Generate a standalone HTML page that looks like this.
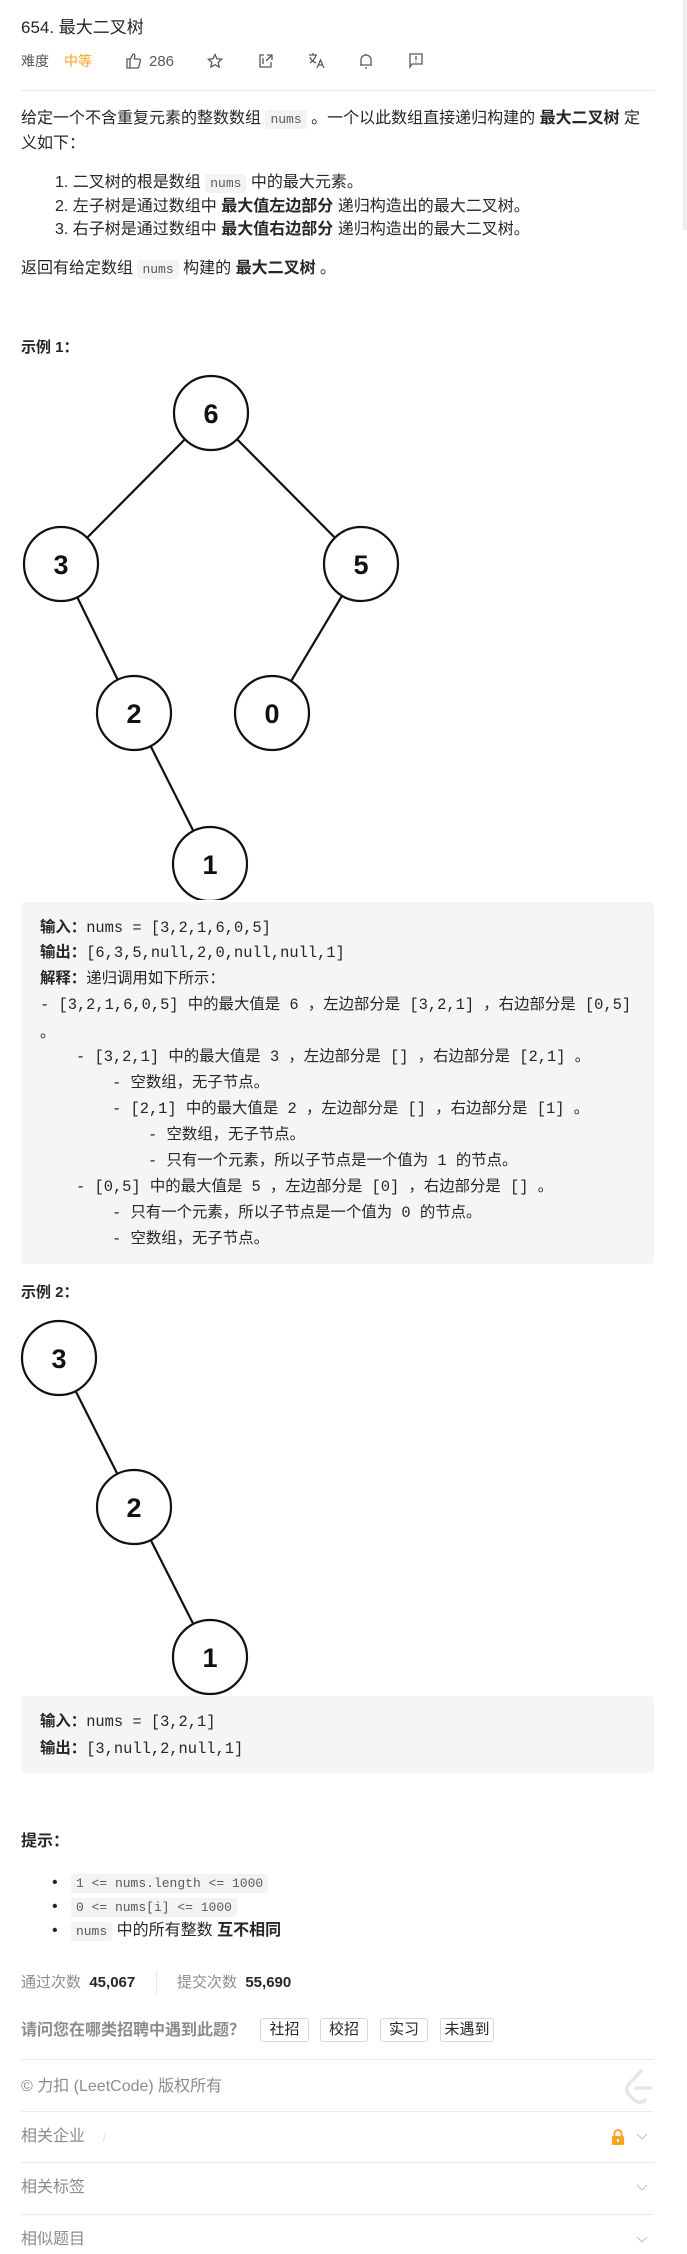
<!DOCTYPE html>
<html><head><meta charset="utf-8">
<style>
*{margin:0;padding:0;box-sizing:border-box}
body{width:687px;height:2254px;background:#fff;position:relative;overflow:hidden;font-family:"Liberation Sans","Noto Sans CJK SC",sans-serif;color:#262626;font-size:14px}
.a{position:absolute;white-space:nowrap}
code{font-family:"Liberation Mono","Noto Sans CJK SC",monospace;background:#f3f3f3;color:#595959;font-size:13px;padding:2px 5px;border-radius:3px}
b{font-weight:bold}
.pre{position:absolute;left:21px;width:633px;background:#f5f5f5;border-radius:4px}
.pl{position:absolute;white-space:nowrap;font-family:"Liberation Mono","Noto Sans CJK SC",monospace;font-size:15.4px;color:#262626;line-height:20px}
.pl b{font-family:"Liberation Sans","Noto Sans CJK SC",sans-serif}
.hr{position:absolute;left:21px;width:633px;height:1px;background:#ebebeb}
.gray{color:#8c8c8c}
.btn{position:absolute;top:2018px;height:24px;border:1px solid #d9d9d9;border-radius:3px;font-size:15px;line-height:22px;text-align:center;color:#262626}
.t{font-size:16px;line-height:24px}
</style></head><body>
<div class="a" style="left:21px;top:16px;font-size:17px;line-height:24px">654. 最大二叉树</div>
<div class="a" style="left:21px;top:51px;font-size:14px;line-height:20px;color:#595959">难度</div>
<div class="a" style="left:64px;top:51px;font-size:14px;line-height:20px;color:#ffa116">中等</div>
<svg class="a" style="left:125px;top:52px" width="60" height="18" viewBox="0 0 60 18" fill="none" stroke="#595959" stroke-width="1.3"><path d="M2 7h3v9H2zM5 8l3-6c1.5 0 2 1 1.8 2.2L9.3 7H14c1 0 1.5 .8 1.3 1.6l-1.5 6.2c-.2.8-.8 1.2-1.5 1.2H5"/><text x="24" y="14" font-size="15" fill="#595959" stroke="none" font-family="Liberation Sans">286</text></svg>
<svg class="a" style="left:207px;top:53px" width="16" height="16" viewBox="0 0 16 16" fill="none" stroke="#595959" stroke-width="1.3"><path d="M8 1.5l2 4.3 4.6.5-3.4 3.1 1 4.6L8 11.7 3.8 14l1-4.6L1.4 6.3 6 5.8z"/></svg>
<svg class="a" style="left:258px;top:53px" width="16" height="16" viewBox="0 0 16 16" fill="none" stroke="#595959" stroke-width="1.3"><path d="M6 2H2v12h11v-5M9 2h5v5M14 2L8 8M5 5v6"/></svg>
<svg class="a" style="left:308px;top:52px" width="18" height="18" viewBox="0 0 18 18" fill="none" stroke="#595959" stroke-width="1.3"><path d="M1 3h8M5 1v2M2 5c1 3 3 5 6 6M8 3c-1 4-3 6-6 8M9 16l3.5-8 3.5 8M10.5 13h4"/></svg>
<svg class="a" style="left:358px;top:52px" width="16" height="18" viewBox="0 0 16 18" fill="none" stroke="#595959" stroke-width="1.3"><path d="M3 13V8a5 5 0 0110 0v5H3zM2 13h12M7 16h2M8 2v1"/></svg>
<svg class="a" style="left:408px;top:52px" width="16" height="18" viewBox="0 0 16 18" fill="none" stroke="#595959" stroke-width="1.3"><path d="M2 2h12v10H4l-2 3zM8 4v4M8 9.5v1"/></svg>
<div class="hr" style="top:90px"></div>

<div class="a t" style="left:21px;top:107px">给定一个不含重复元素的整数数组 <code>nums</code> 。一个以此数组直接递归构建的 <b>最大二叉树</b> 定</div>
<div class="a t" style="left:21px;top:132px">义如下：</div>
<div class="a t" style="left:55px;top:171px">1. 二叉树的根是数组 <code>nums</code> 中的最大元素。</div>
<div class="a t" style="left:55px;top:195px">2. 左子树是通过数组中 <b>最大值左边部分</b> 递归构造出的最大二叉树。</div>
<div class="a t" style="left:55px;top:218px">3. 右子树是通过数组中 <b>最大值右边部分</b> 递归构造出的最大二叉树。</div>
<div class="a t" style="left:21px;top:257px">返回有给定数组 <code>nums</code> 构建的 <b>最大二叉树</b> 。</div>

<div class="a" style="left:21px;top:338px;font-size:15px;line-height:20px"><b>示例 1：</b></div>
<svg class="a" style="left:0;top:360px" width="420" height="540" viewBox="0 360 420 540" stroke="#111" stroke-width="2.2" fill="#fff" font-family="Liberation Sans" font-weight="bold" font-size="27">
<path d="M211 413L61 564M211 413L361 564M61 564L134 713M361 564L272 713M134 713L210 864" fill="none"/>
<circle cx="211" cy="413" r="37"/><circle cx="61" cy="564" r="37"/><circle cx="361" cy="564" r="37"/><circle cx="134" cy="713" r="37"/><circle cx="272" cy="713" r="37"/><circle cx="210" cy="864" r="37"/>
<g fill="#111" stroke="none" text-anchor="middle"><text x="211" y="423">6</text><text x="61" y="574">3</text><text x="361" y="574">5</text><text x="134" y="723">2</text><text x="272" y="723">0</text><text x="210" y="874">1</text></g>
</svg>

<div class="pre" style="top:902px;height:362px"></div>
<div class="pl" style="left:40px;top:918px"><b>输入：</b>nums = [3,2,1,6,0,5]</div>
<div class="pl" style="left:40px;top:943px"><b>输出：</b>[6,3,5,null,2,0,null,null,1]</div>
<div class="pl" style="left:40px;top:969px"><b>解释：</b>递归调用如下所示：</div>
<div class="pl" style="left:40px;top:995px">- [3,2,1,6,0,5] 中的最大值是 6 ，左边部分是 [3,2,1] ，右边部分是 [0,5]</div>
<div class="pl" style="left:40px;top:1023px">。</div>
<div class="pl" style="left:76px;top:1047px">- [3,2,1] 中的最大值是 3 ，左边部分是 [] ，右边部分是 [2,1] 。</div>
<div class="pl" style="left:112px;top:1073px">- 空数组，无子节点。</div>
<div class="pl" style="left:112px;top:1099px">- [2,1] 中的最大值是 2 ，左边部分是 [] ，右边部分是 [1] 。</div>
<div class="pl" style="left:148px;top:1125px">- 空数组，无子节点。</div>
<div class="pl" style="left:148px;top:1151px">- 只有一个元素，所以子节点是一个值为 1 的节点。</div>
<div class="pl" style="left:76px;top:1177px">- [0,5] 中的最大值是 5 ，左边部分是 [0] ，右边部分是 [] 。</div>
<div class="pl" style="left:112px;top:1203px">- 只有一个元素，所以子节点是一个值为 0 的节点。</div>
<div class="pl" style="left:112px;top:1229px">- 空数组，无子节点。</div>

<div class="a" style="left:21px;top:1283px;font-size:15px;line-height:20px"><b>示例 2：</b></div>
<svg class="a" style="left:0;top:1310px" width="260" height="395" viewBox="0 1310 260 395" stroke="#111" stroke-width="2.2" fill="#fff" font-family="Liberation Sans" font-weight="bold" font-size="27">
<path d="M59 1358L134 1507M134 1507L210 1657" fill="none"/>
<circle cx="59" cy="1358" r="37"/><circle cx="134" cy="1507" r="37"/><circle cx="210" cy="1657" r="37"/>
<g fill="#111" stroke="none" text-anchor="middle"><text x="59" y="1368">3</text><text x="134" y="1517">2</text><text x="210" y="1667">1</text></g>
</svg>
<div class="pre" style="top:1696px;height:77px"></div>
<div class="pl" style="left:40px;top:1712px"><b>输入：</b>nums = [3,2,1]</div>
<div class="pl" style="left:40px;top:1739px"><b>输出：</b>[3,null,2,null,1]</div>

<div class="a" style="left:21px;top:1832px;font-size:16px;line-height:20px"><b>提示：</b></div>
<div class="a t" style="left:52px;top:1871px">•&nbsp;&nbsp;&nbsp;<code>1 &lt;= nums.length &lt;= 1000</code></div>
<div class="a t" style="left:52px;top:1895px">•&nbsp;&nbsp;&nbsp;<code>0 &lt;= nums[i] &lt;= 1000</code></div>
<div class="a t" style="left:52px;top:1919px">•&nbsp;&nbsp;&nbsp;<code>nums</code> 中的所有整数 <b>互不相同</b></div>

<div class="a gray" style="left:21px;top:1973px;font-size:15px;line-height:20px">通过次数&nbsp;&nbsp;<b style="color:#262626">45,067</b></div>
<div class="a" style="left:156px;top:1971px;width:1px;height:24px;background:#e8e8e8"></div>
<div class="a gray" style="left:177px;top:1973px;font-size:15px;line-height:20px">提交次数&nbsp;&nbsp;<b style="color:#262626">55,690</b></div>
<div class="a" style="left:21px;top:2020px;font-size:16px;line-height:22px;color:#8c8c8c"><b>请问您在哪类招聘中遇到此题？</b></div>
<div class="btn" style="left:260px;width:49px">社招</div>
<div class="btn" style="left:320px;width:48px">校招</div>
<div class="btn" style="left:380px;width:48px">实习</div>
<div class="btn" style="left:440px;width:54px">未遇到</div>
<div class="hr" style="top:2059px"></div>
<div class="a gray" style="left:21px;top:2076px;font-size:16px;line-height:22px">© 力扣 (LeetCode) 版权所有</div>
<svg class="a" style="left:624px;top:2068px" width="30" height="38" viewBox="0 0 30 38" fill="none" stroke="#e6e6e6" stroke-width="3.5" stroke-linecap="round"><path d="M17 3L5 16c-3 3-3 8 0 11l5 5c3 3 8 3 11 0M12 20h14"/></svg>
<div class="hr" style="top:2111px"></div>
<div class="a gray" style="left:21px;top:2126px;font-size:16px;line-height:22px">相关企业&nbsp;&nbsp;&nbsp;&nbsp;<i style="color:#ddd;font-size:12px">i</i></div>
<svg class="a" style="left:611px;top:2128px" width="14" height="18" viewBox="0 0 14 18"><path d="M3.5 8V5.5a3.5 3.5 0 017 0V8" fill="none" stroke="#ffa116" stroke-width="1.8"/><rect x="1" y="8" width="12" height="9" rx="1.5" fill="#ffa116"/><rect x="6" y="11" width="2" height="3" fill="#fff"/></svg>
<svg class="a" style="left:636px;top:2133px" width="12" height="8" viewBox="0 0 12 8" fill="none" stroke="#ccc" stroke-width="1.3"><path d="M1 1l5 5 5-5"/></svg>
<div class="hr" style="top:2162px"></div>
<div class="a gray" style="left:21px;top:2177px;font-size:16px;line-height:22px">相关标签</div>
<svg class="a" style="left:636px;top:2184px" width="12" height="8" viewBox="0 0 12 8" fill="none" stroke="#ccc" stroke-width="1.3"><path d="M1 1l5 5 5-5"/></svg>
<div class="hr" style="top:2214px"></div>
<div class="a gray" style="left:21px;top:2229px;font-size:16px;line-height:22px">相似题目</div>
<svg class="a" style="left:636px;top:2236px" width="12" height="8" viewBox="0 0 12 8" fill="none" stroke="#ccc" stroke-width="1.3"><path d="M1 1l5 5 5-5"/></svg>
<div class="a" style="left:683px;top:0;width:4px;height:230px;background:#ececec"></div>
</body></html>
